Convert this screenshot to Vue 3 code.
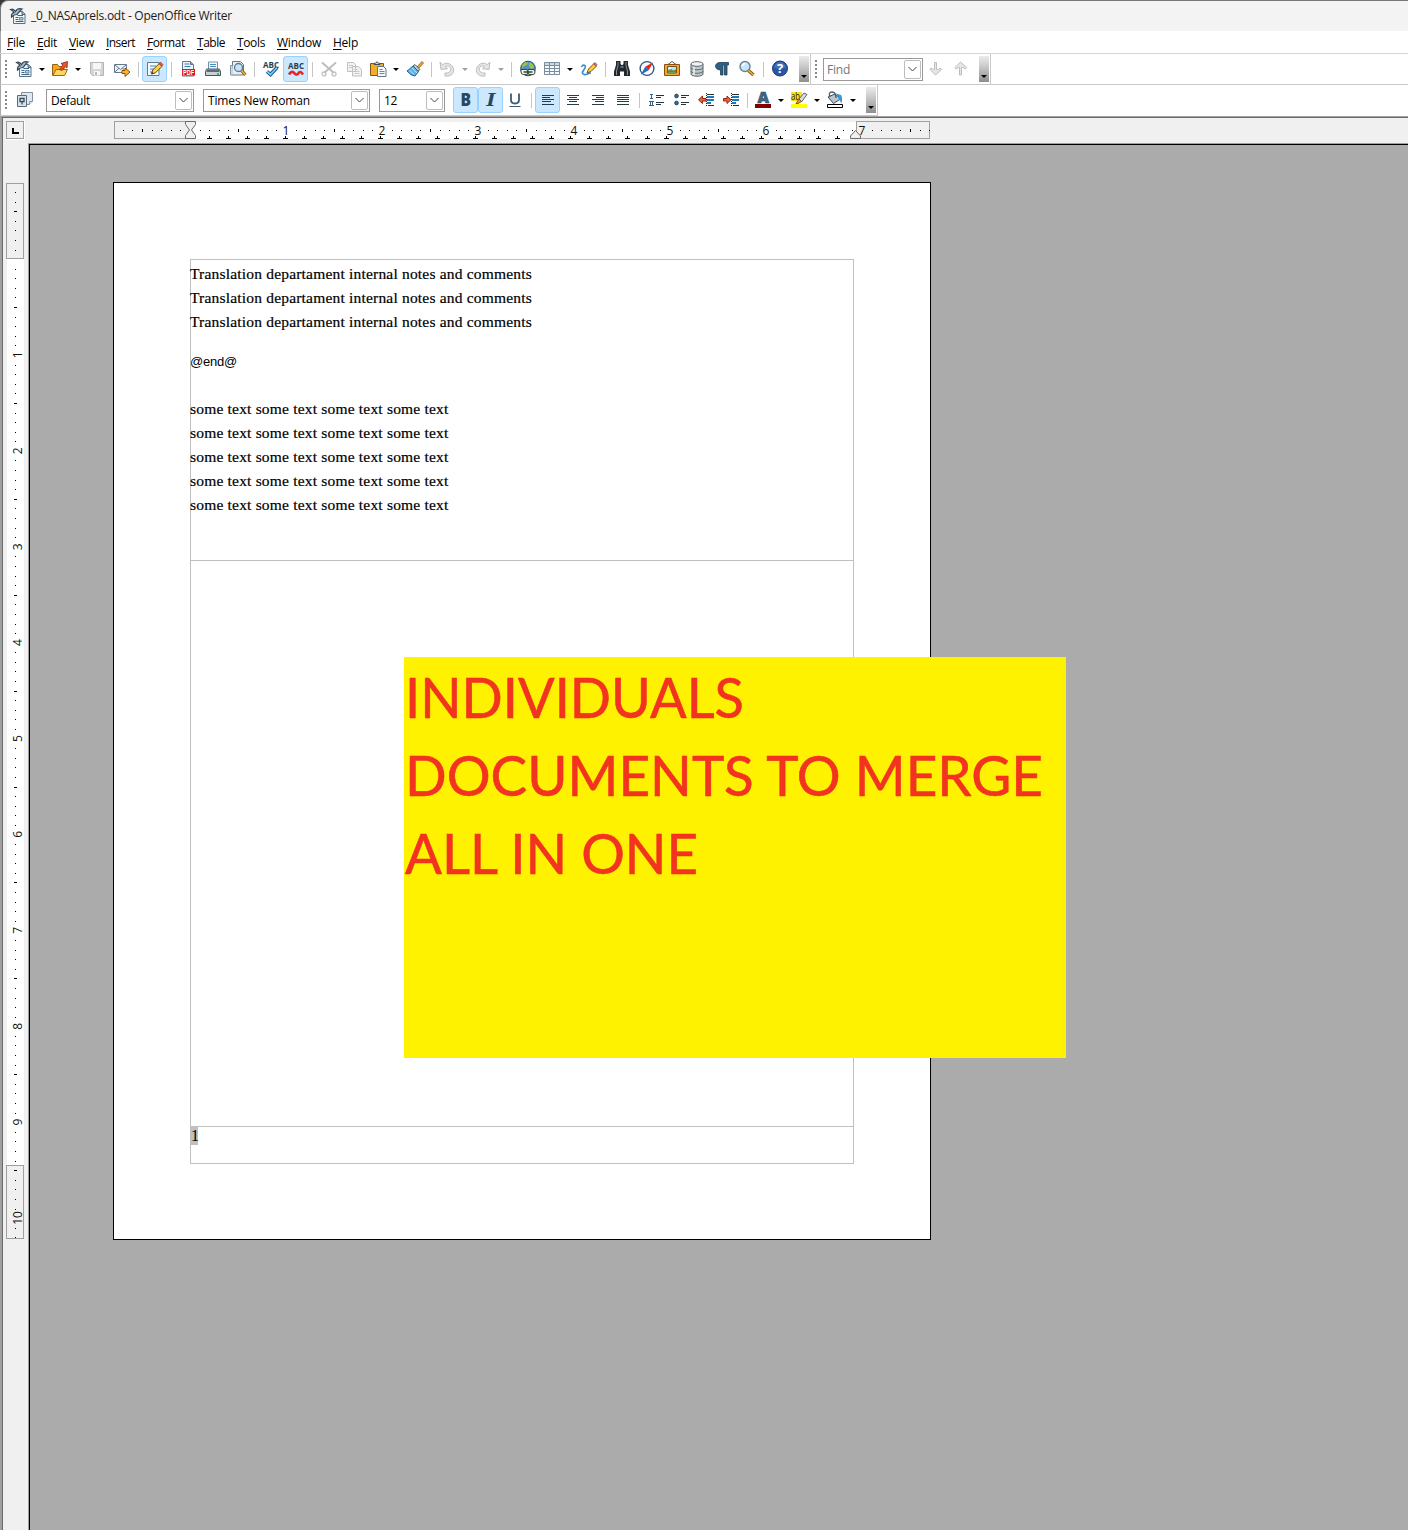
<script setup>
// Stretches a text run to the given advance width by adjusting its tracking.
const vFit = {
  mounted(el, { value }) {
    const natural = el.getBoundingClientRect().width
    el.style.letterSpacing = (value - natural) / el.textContent.length + 'px'
  },
}
// Condenses a text run to the given width by scaling its glyphs.
const vScale = {
  mounted(el, { value }) {
    el.style.transform = `scaleX(${value / el.getBoundingClientRect().width})`
  },
}

const writerPage = '<path d="M3.500 3.500h9l2.500 2.500v9.500H3.500z" fill="#f1f6f9" stroke="#587184"/><path d="M12 3v3.500h3" fill="#9fb3c2" stroke="#51697c"/><path d="M.5 1.500C3 .3 4.500 2 5.500 3.500 7 .8 9.500.3 12 1 9.500 2.500 9 4.500 6.800 6.500 5.200 6.500 3.500 7 1.500 9 1.300 6.500 2 5 4 4.700 3.300 3 2.200 2.500.5 1.500z" fill="#a9bdca" stroke="#2f4657" stroke-width="1.200"/><path d="M7.500 7.500h5.500M5.500 9.500h3M5.500 11.500h3M5.500 13.500h8" stroke="#38658a"/><path d="M9.500 9.500h3.500v2.500H9.500z" fill="#b9cfdf" stroke="#51758f" stroke-width=".8"/>'
const icons = {
  writer: writerPage,
  open: '<path d="M.5 14.500v-11h5l1.500 2h5v3" fill="#f6a81c" stroke="#95601a"/><path d="M.8 14.500 4 8.500h11.500l-3 6z" fill="#ffd65e" stroke="#a56510"/><path d="M7.500 8.500 11 4 9 2.500 15.500.5 15 7 13 5.500 10 9.500z" fill="#e9582a" stroke="#8d250f" stroke-width=".8"/>',
  save: '<path d="M1.500 1.500h13v13h-11l-2-2z" fill="#d5d5d5" stroke="#b5b5b5"/><path d="M4 2h8v6H4zM5 10h6v4.500H5z" fill="#f7f7f7"/><path d="M6 11h2v3H6z" fill="#bbb"/>',
  mail: '<path d="M.5 3.500h12v8H.500z" fill="#f0f4f7" stroke="#637a8c"/><path d="m1 4 5.500 4.500L12 4M1 11l4-4M12 11 8.500 7" fill="none" stroke="#637a8c"/><path d="M8 9.500h3V7l5 4-5 4.500V12.500H8z" fill="#f8b52c" stroke="#96520b"/>',
  edit: '<path d="M.5 1.500h11.500v13H.500z" fill="#f8fbfd" stroke="#61798b"/><path d="M3 5h6M3 8h5M3 11h3" stroke="#3e80b6"/><path d="m4.500 13 1.200-4 6.500-6.500 2.800 2.800-6.500 6.500z" fill="#ffd13b" stroke="#56491e"/><path d="m12 2.600 1.500-1.500L16 3.700l-1.300 1.500z" fill="#e8536a" stroke="#922938" stroke-width=".7"/><path d="m4.500 13 .8-2 1.300 1.300z" fill="#222"/>',
  pdf: '<path d="M2.500.5h8l3 3v11.500h-11z" fill="#edf3f7" stroke="#61798b"/><path d="M10.500.500v3h3" fill="#8da6b7" stroke="#61798b"/><path d="M4.500 3h5M4.500 5.500h6" stroke="#3e80b6"/><path d="M2 8h13v6.500H2z" fill="#e51515"/><text x="3" y="13.700" font-family="Liberation Sans" font-weight="700" font-size="6.500" textLength="11" lengthAdjust="spacingAndGlyphs" fill="#fff">PDF</text>',
  print: '<path d="M3.500 1h9v7.500h-9z" fill="#f5fafd" stroke="#7590a3"/><path d="M5 3.500h6M5 5.500h6" stroke="#468dc1"/><path d="M1.500 8h13l1 3v3.500H.500V11z" fill="#c6d0d7" stroke="#465764"/><path d="M2 8.500h12l.5 2.500h-13z" fill="#5c6c78"/><path d="M12 13h2" stroke="#23b12d" stroke-width="1.500"/>',
  preview: '<path d="M2.500.500h8l3 3v10.500h-11z" fill="#e8f1f6" stroke="#61798b"/><circle cx="8.500" cy="6.500" r="4" fill="#c7e4f8" stroke="#5d7a93" stroke-width="1.300"/><path d="m11.500 9.500 4 4.500" stroke="#875312" stroke-width="3.200"/><path d="m11.500 9.500 4 4.500" stroke="#edb43e" stroke-width="1.500"/><path d="M2.500 4.500H.500v9.500h3" fill="#cad9e2" stroke="#8298a7"/>',
  spell: '<text x="0" y="7.300" font-family="Open Sans" font-weight="700" font-size="8.500" textLength="16" lengthAdjust="spacingAndGlyphs" fill="#263f52">ABC</text><path d="m4 10.500 3.500 3 6.500-7" fill="none" stroke="#174c82" stroke-width="3.600"/><path d="m4 10.500 3.500 3 6.500-7" fill="none" stroke="#7cc8f4" stroke-width="1.800"/>',
  autospell: '<text x="0" y="8" font-family="Open Sans" font-weight="700" font-size="8.500" textLength="16" lengthAdjust="spacingAndGlyphs" fill="#263f52">ABC</text><path d="M1 13.500c2-3.500 4-3 5.500-1.200s3.500 1.500 4-.3c1-1.500 2.500-1.500 4.500 1.500" fill="none" stroke="#e52620" stroke-width="2.600"/>',
  cut: '<path d="M1 1.500 13 12M15 1.500 3 12" stroke="#bcbcbc" stroke-width="1.800"/><circle cx="3" cy="13" r="2" fill="none" stroke="#c3c3c3" stroke-width="1.300"/><circle cx="13" cy="13" r="2" fill="none" stroke="#c3c3c3" stroke-width="1.300"/>',
  copy: '<path d="M1.500 1.500h6l2 2v7h-8zM6.500 5.500h6l3 3v6.500h-9z" fill="#f2f2f2" stroke="#c0c0c0"/><path d="M3 4.500h4M3 6.500h3M8.500 8.500h3M8.500 10.500h5M8.500 12.500h5" stroke="#c8c8c8"/>',
  paste: '<path d="M.5 2.500h13v12H.500z" fill="#f3ae29" stroke="#835515"/><path d="M4 3.500q0-1.500 1.500-1.500 1.500-2.500 3 0 1.500 0 1.500 1.500z" fill="#ccd5db" stroke="#424b52"/><path d="M7.500 5.500h6l2.500 2.500v7.500H7.500z" fill="#f2f8fb" stroke="#61798b"/><path d="M9.500 8.500h3M9.500 10.500h5M9.500 12.500h5" stroke="#4b93c8"/>',
  brush: '<path d="m10 6 5-5.500 1.500 1.500-5 5.500z" fill="#f0ad29" stroke="#815313" stroke-width=".8"/><path d="m8 3.500 5 5-2 1.500-5-5z" fill="#bdcbd5" stroke="#4b6171"/><path d="M6 5 11.500 10.500 8 15Q4 15 0 10 2 8.500 6 5z" fill="#58b4ed" stroke="#235e98"/><path d="m2.500 9 4.500 4.500M5 7l5 5" stroke="#bce6fc"/>',
  undo: '<path d="m1 1 1 7.500 6.500-.8-2.300-2C10 3.500 13.500 7 11 10.500 9 12.500 7 12 6 12v3c7 1 10-4 8-8.500C12 2 6.500 1 3.700 3.800z" fill="#e5e5e5" stroke="#bdbdbd"/>',
  redo: '<path d="m15 1-1 7.500-6.500-.8 2.300-2C6 3.500 2.500 7 5 10.500 7 12.500 9 12 10 12v3C3 16 0 11 2 6.500 4 2 9.500 1 12.300 3.800z" fill="#e5e5e5" stroke="#bdbdbd"/>',
  web: '<circle cx="8" cy="7.500" r="7.300" fill="#4f91c8" stroke="#244e72"/><path d="M2 4Q5 0 8 1.500L7 4 4 5 2 8zM9 1.500q5 .5 5 5.500l-3 1-2-3zM4 11l8-1-3 4z" fill="#9bc53a"/><path d="M1 8.500h5q2 0 2 2.500t-2 2.500H3.500Q1 13.500 1 11zM8 8.500h5q2 0 2 2.500t-2 2.500H10q-2 0-2-2.500z" fill="#f6f6ee" stroke="#33443f"/><path d="M3.500 11h9" stroke="#33443f" stroke-width="1.500"/>',
  table: '<path d="M.5 1.500h15v12H.500z" fill="#f7fafc" stroke="#7b8c9a"/><path d="M1 2h14v2.500H1z" fill="#ccd9e2"/><path d="M.5 4.500h15M.5 7.500h15M.5 10.500h15M5.500 1.500v12M10.500 1.500v12" stroke="#7b8c9a"/>',
  draw: '<path d="M.5 6C2 3 5.500 4 4 7S0 11 2 13s5-1 8-1" fill="none" stroke="#368bd0" stroke-width="1.600"/><path d="m6 12 1.500-4 5.500-5.500 2.500 2.500L10 10.500z" fill="#ffcf3a" stroke="#76501a"/><path d="m12.500 3 1.500-1.500 2 2.200L14.700 5z" fill="#ee6875" stroke="#963540" stroke-width=".7"/>',
  find: '<path d="M2 0h4.500v3l1 1h1l1-1V0H14v4l2 6.500V15h-6v-4.500H6V15H0v-4.500L2 4z" fill="#20282e"/><path d="M4 1v3.500L2.500 10v4M12 1v3.500L13.500 10v4" stroke="#879099" fill="none"/><path d="M6.500 6h3" stroke="#aab0b4"/>',
  compass: '<circle cx="8" cy="7.500" r="6.900" fill="#fafcfe" stroke="#315a82" stroke-width="1.400"/><path d="m9.700 9.200 4.500-8-8 4.600z" fill="#e5261e"/><path d="m6.300 5.800 3.400 3.400-8 4.600z" fill="#226fc1"/>',
  gallery: '<path d="m4 3.500 4-3 4 3" fill="none" stroke="#77502a"/><path d="M.5 3.500h15v11H.500z" fill="#efa72f" stroke="#875116"/><path d="M3.500 5.500h9v6.500h-9z" fill="#b7e2f7" stroke="#805018"/><path d="M4 11.500V9.500l3-1.500 2 1.500 3-1v3z" fill="#55962d"/><circle cx="6" cy="7" r="1" fill="#fff"/>',
  database: '<path d="M2 3v10c0 3 12 3 12 0V3z" fill="#bfc6ca" stroke="#5e686e"/><ellipse cx="8" cy="3" rx="6" ry="2.300" fill="#f0f3f5" stroke="#5e686e"/><path d="M2 6.500c0 3 12 3 12 0M2 10c0 3 12 3 12 0" fill="none" stroke="#5e686e"/><path d="M5 6v8" stroke="#edf1f3" stroke-width="1.500"/>',
  pilcrow: '<path d="M14.500 1.500v2.500H13V14h-2.500V4H9V14H6.500V9C0 9 0 1.500 6 1.500z" fill="#2f5f83" stroke="#1f4058" stroke-width=".8"/>',
  zoom: '<circle cx="6" cy="5.500" r="5" fill="#c9e7fb" stroke="#67829a" stroke-width="1.400"/><path d="M3.500 5Q4 2.500 6.500 2.500" fill="none" stroke="#fff" stroke-width="1.500"/><path d="m9.500 9.500 5 4.500" stroke="#895313" stroke-width="3.400"/><path d="m9.500 9.500 5 4.500" stroke="#efb640" stroke-width="1.600"/>',
  help: '<circle cx="8" cy="7.500" r="7.500" fill="#2955a5" stroke="#17396f"/><path d="M2 6.500Q4 1 8 1t6 5.500Q8 9 2 6.500z" fill="#5e86cb" opacity=".55"/><text x="8" y="12.300" text-anchor="middle" font-family="Open Sans" font-weight="700" font-size="13" fill="#fff">?</text>',
  down: '<path d="M6.500 1.500h2v7h1.500L12.500 7l1 1.500L7.500 14 2 8.500 3 7l2.500 1.500h1z" fill="#e6e6e6" stroke="#bcbcbc"/>',
  up: '<path d="M6.500 14h2V6.500h1.500L12.500 8l1-1.500L7.500 1 2 6.500 3 8l2.500-1.500h1z" fill="#e6e6e6" stroke="#bcbcbc"/>',
  styles: '<path d="M4.500.500h11v9l-3 3h-8z" fill="#dfe8f0" stroke="#8193a2"/><path d="M15.500 9.500h-3v3" fill="#fff" stroke="#8193a2"/><path d="M.5 3.500h9v11h-9z" fill="#d8e1e8" stroke="#576b7b"/><path d="M3 6.500h4v3H3zM5 9.500v3" fill="#f8fafb" stroke="#344b5d" stroke-width="1.300"/>',
  bold: '<text x="2.500" y="14" font-family="Open Sans" font-weight="800" font-size="18" textLength="10.500" lengthAdjust="spacingAndGlyphs" fill="#29475e">B</text>',
  italic: '<text x="3" y="13.500" font-family="Liberation Serif" font-style="italic" font-weight="700" font-size="19" textLength="9.500" lengthAdjust="spacingAndGlyphs" fill="#29475e">I</text>',
  underline: '<path d="M4 1.500v6.300q0 3.700 4 3.700t4-3.700V1.500" fill="none" stroke="#3f5a6e" stroke-width="1.800"/><path d="M2.500 14.500h11" stroke="#3f5a6e"/>',
  left: '<path d="M2 3.500h12M2 5.500h8M2 7.500h12M2 9.500h9M2 12.500h12" stroke="#283c4a"/>',
  center: '<path d="M2 3.500h12M4 5.500h8M2 7.500h12M4 9.500h8M2 12.500h12" stroke="#283c4a"/>',
  right: '<path d="M2 3.500h12M6 5.500h8M2 7.500h12M5 9.500h9M2 12.500h12" stroke="#283c4a"/>',
  justify: '<path d="M2 3.500h12M2 5.500h12M2 7.500h12M2 9.500h12M2 12.500h12" stroke="#283c4a"/>',
  numbers: '<path d="M8 3.500h8M8 5.500h5M8 10.500h8M8 12.500h5" stroke="#24343f"/><path d="M2 2.500h3M3.500 2.500v3.500M2 6.500h3M1 9.500h5M2.500 9.500v4M4.500 9.500v4M1 13.500h5" stroke="#346181" fill="none"/>',
  bullets: '<path d="M8 3.500h8M8 5.500h5M8 10.500h8M8 12.500h5" stroke="#24343f"/><circle cx="3.500" cy="4" r="1.900" fill="#346b8e" stroke="#1c3547" stroke-width=".7"/><circle cx="3.500" cy="11" r="1.900" fill="#346b8e" stroke="#1c3547" stroke-width=".7"/>',
  outdent: '<path d="M9 2.500h7M10 13.500h6" stroke="#24343f"/><path d="M9 5h7M9 8h7M9 11h4" stroke="#197bb8" stroke-width="2"/><path d="M8.500 1v14" stroke="#222" stroke-dasharray="1 1"/><path d="M8 6.500H4.500V4L.5 7.800l4 3.700V9H8z" fill="#ee6139" stroke="#8d2913"/>',
  indent: '<path d="M9 2.500h7M10 13.500h6" stroke="#24343f"/><path d="M9 5h7M9 8h7M9 11h4" stroke="#197bb8" stroke-width="2"/><path d="M8.500 1v14" stroke="#222" stroke-dasharray="1 1"/><path d="M.5 6.500H4V4l4 3.800-4 3.700V9H.500z" fill="#ee6139" stroke="#8d2913"/>',
  fontcolor: '<text x="2.500" y="11" font-family="Open Sans" font-weight="800" font-size="15" textLength="11.500" lengthAdjust="spacingAndGlyphs" fill="#3f6785" stroke="#213c50" stroke-width=".5">A</text><path d="M0 12h16v4H0z" fill="#800000"/>',
  highlight: '<path d="M0 0h11v9H0z" fill="#ffe01c"/><text x="0" y="8.300" font-family="Open Sans" font-size="10" textLength="9" lengthAdjust="spacingAndGlyphs" fill="#25220b">ab</text><path d="m8 7 5-6 3 1.500-5.500 7.500z" fill="#d4dce2" stroke="#596872"/><path d="m8 7 2.500 2.500L7 11.500H5z" fill="#ec9c28" stroke="#8e4e14"/><path d="M0 12h16v4H0z" fill="#ff0"/>',
  bucket: '<path d="m1 5 7-3 5.500 5-7 4.500z" fill="#b9c4cc" stroke="#3b4c58"/><path d="M3 5Q1 0 5 0t4 6" fill="none" stroke="#4b5a64" stroke-width="1.300"/><path d="m9 1.500 5 1.500Q16 6 14.500 11.500L12 7z" fill="#3398d6"/><path d="M.5 12.500h15v3H.500z" fill="#fff" stroke="#000"/>',
}

const menus = [['File', 18], ['Edit', 20], ['View', 25], ['Insert', 29], ['Format', 38], ['Table', 28], ['Tools', 28], ['Window', 44], ['Help', 25]]

// Cells are [icon, width, state]; '|' is a separator and 'v' a drop-down arrow.
const standard = [
  ['writer', 24], ['v', 12], ['open', 24], ['v', 12], ['save', 25], ['mail', 25], ['|', 8],
  ['edit', 25, 'on'], ['|', 8], ['pdf', 25], ['print', 25], ['preview', 25], ['|', 8],
  ['spell', 25], ['autospell', 25, 'on'], ['|', 8], ['cut', 25], ['copy', 25], ['paste', 24], ['v', 12],
  ['brush', 25], ['|', 8], ['undo', 24], ['v', 12, 'off'], ['redo', 24], ['v', 12, 'off'], ['|', 8],
  ['web', 25], ['table', 24], ['v', 12], ['draw', 25], ['|', 8],
  ['find', 25], ['compass', 25], ['gallery', 25], ['database', 25], ['pilcrow', 25], ['zoom', 25], ['|', 8], ['help', 25],
]
const formatting = [
  ['bold', 25, 'on'], ['italic', 25, 'on'], ['underline', 24], ['|', 8],
  ['left', 25, 'on'], ['center', 25], ['right', 25], ['justify', 25], ['|', 8],
  ['numbers', 25], ['bullets', 25], ['outdent', 25], ['indent', 25], ['|', 8],
  ['fontcolor', 24], ['v', 12], ['highlight', 24], ['v', 12], ['bucket', 24], ['v', 12],
]
const combos = [['Default', 148, 39], ['Times New Roman', 167, 102], ['12', 66, 13]]

const range = (a, b) => Array.from({ length: b - a + 1 }, (_, i) => a + i)
const isInch = k => k > 0 && k % 10 === 0
const hTicks = range(-7, 77).filter(k => k !== 0 && !isInch(k)).map(k => ({ k, p: Math.floor(190.4 + 9.6 * k), half: Math.abs(k % 10) === 5 }))
const tabs = range(1, 34).map(k => Math.floor(190.3 + 19.03 * k))
const vTicks = range(-7, 102).filter(k => k !== 0 && !isInch(k)).map(k => ({ k, p: Math.floor(259.6 + 9.59 * k), half: Math.abs(k % 10) === 5 }))

const notes = range(1, 3)
const body = range(1, 5)
const caption = [['INDIVIDUALS', 339], ['DOCUMENTS TO MERGE', 638], ['ALL IN ONE', 293]]
</script>

<template>
  <div class="app">
    <header class="title">
      <svg class="ico" viewBox="0 0 16 16" v-html="icons.writer"></svg>
      <span v-fit="201">_0_NASAprels.odt - OpenOffice Writer</span>
    </header>
    <nav class="menu">
      <span v-for="[m, w] in menus" :key="m" v-fit="w"><u>{{ m[0] }}</u>{{ m.slice(1) }}</span>
    </nav>

    <div class="bar">
      <div class="strip first">
        <i class="grip"></i>
        <div class="cells">
          <div v-for="([n, w, s], i) in standard" :key="i" class="cell" :class="s" :style="{ width: w + 'px' }">
            <i v-if="n === '|'" class="sep"></i>
            <i v-else-if="n === 'v'" class="arrow"></i>
            <svg v-else class="ico" viewBox="0 0 16 16" v-html="icons[n]"></svg>
          </div>
        </div>
        <div class="more"><i class="arrow"></i></div>
      </div>
      <div class="strip search">
        <i class="grip"></i>
        <div class="combo find"><span v-fit="23">Find</span><b><svg viewBox="0 0 9 6"><path d="M.5 1 4.500 5l4-4" /></svg></b></div>
        <div class="cell step"><svg class="ico" viewBox="0 0 16 16" v-html="icons.down"></svg></div>
        <div class="cell step"><svg class="ico" viewBox="0 0 16 16" v-html="icons.up"></svg></div>
        <div class="more"><i class="arrow"></i></div>
      </div>
    </div>

    <div class="bar second">
      <div class="strip format">
        <i class="grip"></i>
        <div class="cell styles"><svg class="ico" viewBox="0 0 16 16" v-html="icons.styles"></svg></div>
        <div class="combos">
          <div v-for="[t, w, f] in combos" :key="t" class="combo" :style="{ width: w + 'px' }">
            <span v-fit="f">{{ t }}</span><b><svg viewBox="0 0 9 6"><path d="M.5 1 4.500 5l4-4" /></svg></b>
          </div>
        </div>
        <div class="cells">
          <div v-for="([n, w, s], i) in formatting" :key="i" class="cell" :class="s" :style="{ width: w + 'px' }">
            <i v-if="n === '|'" class="sep"></i>
            <i v-else-if="n === 'v'" class="arrow"></i>
            <svg v-else class="ico" viewBox="0 0 16 16" v-html="icons[n]"></svg>
          </div>
        </div>
        <div class="more"><i class="arrow"></i></div>
      </div>
    </div>

    <div class="edge"></div>
    <svg class="hruler" width="1408" height="28" viewBox="0 116 1408 28" shape-rendering="crispEdges">
      <path d="M0 116h1408v1H0z" fill="#a0a0a0" />
      <path d="M0 117h2v27H0z" fill="#a0a0a0" />
      <path d="M2 117h1406v1H3v26H2z" fill="#696969" />
      <path d="M6 121h19v19H6z" fill="#fff" />
      <path d="M6.500 121.500h17v17h-17z" fill="#f0f0f0" stroke="#a0a0a0" />
      <path d="M12 128h2v4h5v2h-7z" />
      <path d="M190 122h666v17H190z" fill="#fff" />
      <path d="M114.500 121.500h76v17h-76zM856.500 121.500h73v17h-73z" fill="#f0f0f0" stroke="#a0a0a0" />
      <rect v-for="t in hTicks" :key="t.k" :x="t.p" :y="t.half ? 129 : 130" width="1" :height="t.half ? 3 : 1" />
      <path v-for="x in tabs" :key="x" :d="`M${x} 136h1v2h2v1h-5v-1h2z`" />
      <g class="digits"><text v-for="n in 7" :key="n" :x="190 + 96 * n" y="135">{{ n }}</text></g>
      <path d="M185.500 121.500h10v3l-4 5.500 4 5.500v3h-10v-3l4-5.500-4-5.500z" fill="#f0f0f0" stroke="#696969" shape-rendering="auto" />
      <path d="M850.500 138.500v-2.500l5-5.500 5 5.500v2.500z" fill="#f0f0f0" stroke="#696969" shape-rendering="auto" />
      <path d="M28 143h1380v1H28z" fill="#a0a0a0" />
    </svg>

    <div class="work">
      <svg class="vruler" width="29" height="1386" viewBox="0 144 29 1386" shape-rendering="crispEdges">
        <path d="M0 144h29v1386H0z" fill="#f0f0f0" />
        <path d="M0 144h2v1386H0z" fill="#a0a0a0" /><path d="M2 144h1v1386H2z" fill="#696969" />
        <path d="M7 183h17v1056H7z" fill="#fff" />
        <path d="M6.500 183.500h17v75h-17zM6.500 1165.500h17v73h-17z" fill="#f0f0f0" stroke="#a0a0a0" />
        <rect v-for="t in vTicks" :key="t.k" :x="t.half ? 14 : 15" :y="t.p" :width="t.half ? 3 : 1" height="1" />
        <g class="digits"><text v-for="n in 10" :key="n" :transform="`translate(21.500 ${259 + 95.900 * n}) rotate(-90)`">{{ n }}</text></g>
        <path d="M28 144h1v1386h-1z" fill="#a0a0a0" />
      </svg>
      <main class="desk">
        <article class="page">
          <section class="frame head">
            <p v-for="n in notes" :key="n"><span v-fit="342">Translation departament internal notes and comments</span></p>
            <p class="mark"><span v-fit="47">@end@</span></p>
            <p v-for="n in body" :key="'b' + n"><span v-fit="258.500">some text some text some text some text</span></p>
          </section>
          <section class="frame main"></section>
          <section class="frame foot"><span>1</span></section>
        </article>
        <aside class="caption">
          <p v-for="[t, w] in caption" :key="t"><span v-scale="w">{{ t }}</span></p>
        </aside>
      </main>
    </div>
  </div>
</template>

<style>
body { margin: 0; }
</style>

<style scoped>
.app { width: 1408px; height: 1530px; overflow: hidden; background: linear-gradient(#3a363b, #3a363b) 0 0 / 8px 8px no-repeat, linear-gradient(#a8a8a8, #a8a8a8) 0 0 / 1px 100% no-repeat, #fff; font: 12px/16px "Open Sans", "Noto Sans", sans-serif; color: #000; }
.app * { box-sizing: border-box; }
p { margin: 0; }
span { white-space: pre; }
.ico { width: 16px; height: 16px; flex: none; display: block; overflow: visible; }
.title { height: 31px; display: flex; align-items: center; gap: 5px; padding: 0 0 1px 9px; background: #f3f3f3; border-top: 1px solid #77777a; border-left: 1px solid #77777a; border-top-left-radius: 8px; color: #1b1b1b; }
.title span { padding-top: 1px; }
.menu { height: 22px; display: flex; align-items: center; gap: 12px; padding: 1px 0 0 7px; }
.menu u { text-underline-offset: 2px; text-decoration-thickness: 1px; }
.bar { height: 31px; display: flex; border-top: 1px solid #d5d5d5; }
.strip { height: 30px; display: flex; align-items: center; border-right: 1px solid #c8c8c8; box-shadow: 0 1px #c8c8c8; }
.first { width: 811px; padding-left: 5px; }
.search { width: 180px; padding-left: 4px; }
.format { width: 878px; padding-left: 5px; }
.second { border-top-color: #c8c8c8; }
.grip { width: 2px; height: 18px; flex: none; background: repeating-linear-gradient(#888 0 2px, transparent 2px 4px); }
.cells { display: flex; }
.first .cells { margin-left: 5px; }
.cell { height: 26px; flex: none; display: flex; align-items: center; justify-content: center; }
.on { background: #cce8ff; border: 1px solid #99d1ff; border-radius: 3px; }
.sep { width: 1px; height: 15px; background: #c5c5c5; }
.arrow { width: 0; height: 0; border: 3px solid transparent; border-top-color: #000; border-bottom: 0; }
.off .arrow { border-top-color: #a0a0a0; }
.more { width: 10px; height: 26px; margin-left: auto; margin-right: 1px; flex: none; display: flex; align-items: flex-end; justify-content: center; padding-bottom: 4px; background: linear-gradient(#ececec, #c0c0c0 50%, #8e8e8e); }
.combo { height: 23px; display: flex; align-items: center; justify-content: space-between; padding: 0 1px 0 4px; background: #fff; border: 1px solid #999; }
.combos .combo span, .find span { padding-top: 1px; }
.combo b { width: 17px; height: 19px; display: flex; align-items: center; justify-content: center; border: 1px solid #bdbdbd; border-radius: 2px; }
.combo svg { width: 9px; height: 6px; fill: none; stroke: #444; }
.find { width: 100px; margin-left: 6px; padding-left: 3px; color: #777; }
.step { width: 25px; }
.styles { width: 25px; margin-left: 5px; }
.combos { display: flex; gap: 9px; margin: 0 8px 0 9px; }
.edge { height: 0; }
.hruler { display: block; height: 28px; margin-top: 1px; background: #f0f0f0; }
.digits text { font: 12px "Open Sans", sans-serif; text-anchor: middle; fill: #111; }
.work { display: flex; height: 1386px; }
.vruler { display: block; flex: none; }
.desk { position: relative; flex: 1; border: solid #000; border-width: 1px 0 0 1px; background: #ababab; padding: 37px 0 0 83px; }
.page { width: 818px; height: 1058px; padding: 76px 76px 75px; background: #fff; border: 1px solid #000; display: flex; flex-direction: column; }
.frame { width: 664px; flex: none; border: 1px solid #c0c0c0; border-bottom: 0; font: 15.5px/24px "Liberation Serif", serif; }
.head { height: 301px; padding-top: 2px; }
.main { height: 566px; }
.foot { height: 38px; border-bottom: 1px solid #c0c0c0; }
.foot span { display: block; width: 7px; height: 18px; line-height: 18px; background: #c0c0c0; font-size: 16px; }
.frame p { height: 24px; margin-left: -1px; -webkit-text-stroke: .2px #000; }
.frame .mark { height: 63px; padding-top: 16px; font: 13px/24px "Liberation Sans", sans-serif; -webkit-text-stroke: 0; }
.caption { position: absolute; left: 374px; top: 512px; width: 662px; height: 401px; background: #fff200; color: #f2331f; font: 56px/78px Lato, sans-serif; padding: 1px 0 0 1px; -webkit-text-stroke: .6px #f2331f; }
.caption span { display: inline-block; transform-origin: 0 50%; }
</style>
